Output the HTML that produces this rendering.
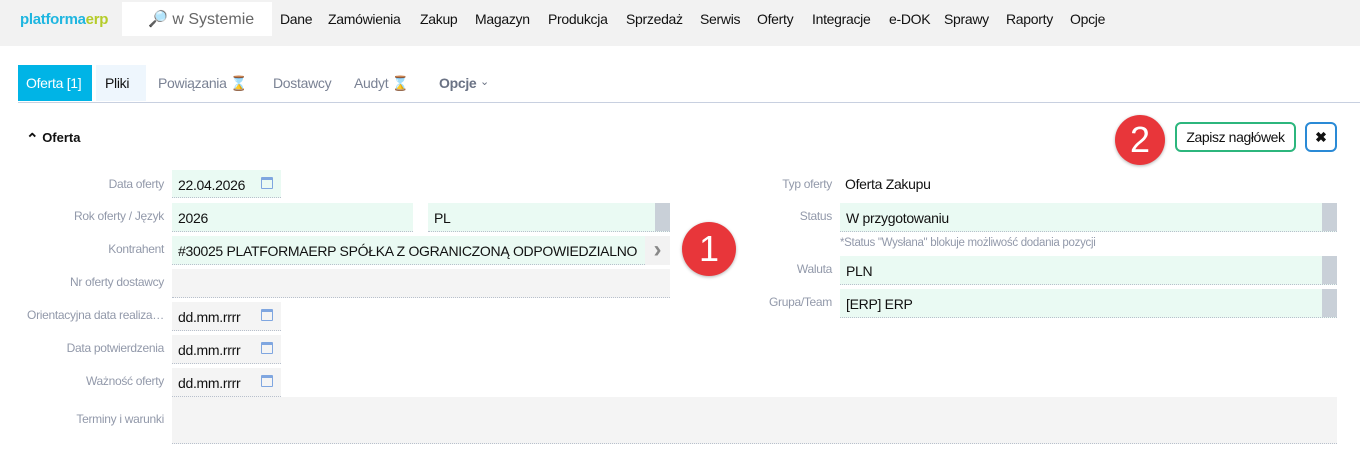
<!DOCTYPE html>
<html><head><meta charset="utf-8"><style>
*{margin:0;padding:0;box-sizing:border-box}
body{width:1360px;height:452px;background:#fff;font-family:"Liberation Sans",sans-serif;position:relative;overflow:hidden;color:#111}
.a{position:absolute;white-space:nowrap}
.nav{top:11px;font-size:14px;letter-spacing:-0.3px;color:#111}
.lab{font-size:12px;color:#9299aa;text-align:right;width:160px;left:4px;letter-spacing:-0.3px}
.rl{font-size:12px;color:#9299aa;text-align:right;width:160px;left:672px;letter-spacing:-0.3px}
.f{position:absolute;background:#eafaf3;border-bottom:1px dotted #b8c0cc;font-size:14px;padding:7px 6px 0 6px;letter-spacing:-0.3px;white-space:nowrap}
.g{background:#f4f4f4}
.cal{position:absolute;right:8px;top:7px;width:12px;height:12px;border:1.5px solid #7fa6e0;border-top-width:3px;border-radius:1px}
.gb{position:absolute;right:0;top:0;bottom:0;width:15px;background:#c9d0d8}
.badge{position:absolute;border-radius:50%;background:#e8363a;color:#fff;font-size:36px;text-align:center;box-shadow:0 1px 3px rgba(0,0,0,.3)}
</style></head><body>
<div class="a" style="left:0;top:0;width:1360px;height:46px;background:#f2f2f2"></div>
<div class="a" style="left:20px;top:11px;font-size:15px;font-weight:bold;letter-spacing:-0.3px"><span style="color:#1fb6e0">platforma</span><span style="color:#b5cc2a">erp</span></div>
<div class="a" style="left:122px;top:2px;width:150px;height:34px;background:#fff"></div>
<div class="a" style="left:148px;top:9px;font-size:16px;color:#666"><span style="color:#7aa8d8">&#128270;</span> w Systemie</div>
<div class="a nav" style="left:280px">Dane</div>
<div class="a nav" style="left:328px">Zamówienia</div>
<div class="a nav" style="left:420px">Zakup</div>
<div class="a nav" style="left:475px">Magazyn</div>
<div class="a nav" style="left:548px">Produkcja</div>
<div class="a nav" style="left:626px">Sprzedaż</div>
<div class="a nav" style="left:700px">Serwis</div>
<div class="a nav" style="left:757px">Oferty</div>
<div class="a nav" style="left:812px">Integracje</div>
<div class="a nav" style="left:889px">e-DOK</div>
<div class="a nav" style="left:944px">Sprawy</div>
<div class="a nav" style="left:1006px">Raporty</div>
<div class="a nav" style="left:1070px">Opcje</div>

<div class="a" style="left:18px;top:65px;width:74px;height:36px;background:#00b4e6"></div>
<div class="a" style="left:26px;top:75px;font-size:14px;color:#fff;letter-spacing:-0.3px">Oferta [1]</div>
<div class="a" style="left:96px;top:65px;width:50px;height:36px;background:#eef6fd"></div>
<div class="a" style="left:105px;top:75px;font-size:14px;letter-spacing:-0.3px">Pliki</div>
<div class="a" style="left:158px;top:75px;font-size:14px;color:#7a8294;letter-spacing:-0.3px">Powiązania <span style="color:#d9a84a">⌛</span></div>
<div class="a" style="left:273px;top:75px;font-size:14px;color:#7a8294;letter-spacing:-0.3px">Dostawcy</div>
<div class="a" style="left:354px;top:75px;font-size:14px;color:#7a8294;letter-spacing:-0.3px">Audyt <span style="color:#d9a84a">⌛</span></div>
<div class="a" style="left:439px;top:75px;font-size:14px;color:#6a7284;font-weight:bold;letter-spacing:-0.3px">Opcje <span style="font-weight:normal;font-size:11px;position:relative;top:-3px">&#8964;</span></div>
<div class="a" style="left:18px;top:102px;width:1342px;height:1px;background:#c8d0e0"></div>

<div class="a" style="left:26px;top:128px;font-size:13px;font-weight:bold"><span style="font-size:15px;position:relative;top:2px">⌃</span> Oferta</div>

<div class="badge" style="left:1115px;top:115px;width:50px;height:50px;line-height:50px">2</div>
<div class="a" style="left:1175px;top:122px;width:121px;height:30px;border:2px solid #2cb67d;border-radius:6px;font-size:14px;text-align:center;line-height:26px;letter-spacing:-0.4px">Zapisz nagłówek</div>
<div class="a" style="left:1305px;top:122px;width:32px;height:30px;border:2px solid #2a8ad6;border-radius:6px;font-size:14px;font-weight:bold;text-align:center;line-height:26px">✖</div>

<div class="a lab" style="top:177px">Data oferty</div>
<div class="f" style="left:172px;top:170px;width:109px;height:28px">22.04.2026<span class="cal"></span></div>
<div class="a lab" style="top:209px">Rok oferty / Język</div>
<div class="f" style="left:172px;top:203px;width:241px;height:29px">2026</div>
<div class="f" style="left:428px;top:203px;width:242px;height:29px">PL<span class="gb"></span></div>
<div class="a lab" style="top:242px">Kontrahent</div>
<div class="f" style="left:172px;top:236px;width:473px;height:29px">#30025 PLATFORMAERP SPÓŁKA Z OGRANICZONĄ ODPOWIEDZIALNO</div>
<div class="a" style="left:645px;top:236px;width:25px;height:29px;background:#f2f2f2;color:#888;font-size:24px;font-weight:bold;text-align:center;line-height:28px">›</div>
<div class="a lab" style="top:275px">Nr oferty dostawcy</div>
<div class="f g" style="left:172px;top:269px;width:498px;height:29px"></div>
<div class="a lab" style="top:308px">Orientacyjna data realiza…</div>
<div class="f g" style="left:172px;top:302px;width:109px;height:29px">dd.mm.rrrr<span class="cal"></span></div>
<div class="a lab" style="top:341px">Data potwierdzenia</div>
<div class="f g" style="left:172px;top:335px;width:109px;height:29px">dd.mm.rrrr<span class="cal"></span></div>
<div class="a lab" style="top:374px">Ważność oferty</div>
<div class="f g" style="left:172px;top:368px;width:109px;height:29px">dd.mm.rrrr<span class="cal"></span></div>
<div class="a lab" style="top:412px">Terminy i warunki</div>
<div class="f g" style="left:172px;top:397px;width:1165px;height:47px"></div>

<div class="badge" style="left:682px;top:222px;width:54px;height:54px;line-height:54px">1</div>

<div class="a rl" style="top:177px">Typ oferty</div>
<div class="a" style="left:845px;top:176px;font-size:14px;letter-spacing:-0.3px">Oferta Zakupu</div>
<div class="a rl" style="top:209px">Status</div>
<div class="f" style="left:840px;top:203px;width:497px;height:29px">W przygotowaniu<span class="gb"></span></div>
<div class="a" style="left:840px;top:237px;font-size:11.5px;color:#9299aa;letter-spacing:-0.3px">*Status "Wysłana" blokuje możliwość dodania pozycji</div>
<div class="a rl" style="top:262px">Waluta</div>
<div class="f" style="left:840px;top:256px;width:497px;height:29px">PLN<span class="gb"></span></div>
<div class="a rl" style="top:295px">Grupa/Team</div>
<div class="f" style="left:840px;top:289px;width:497px;height:29px">[ERP] ERP<span class="gb"></span></div>
</body></html>
